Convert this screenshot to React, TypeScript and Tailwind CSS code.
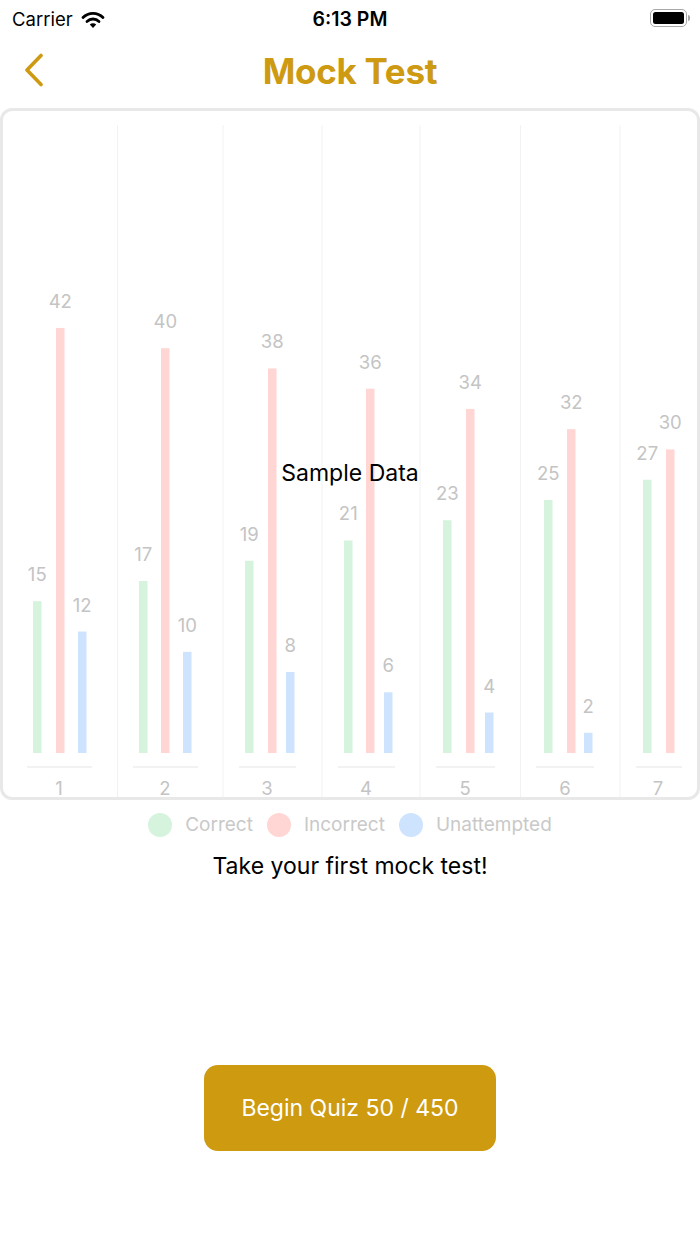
const correct = [15, 17, 19, 21, 23, 25, 27];
const incorrect = [42, 40, 38, 36, 34, 32, 30];
const unattempted = [12, 10, 8, 6, 4, 2, 0];

// left edge of each bar inside the group (green, red, blue)
const barX = [
  [33, 56, 78],
  [139, 161, 183],
  [245, 268, 286],
  [344, 366, 384],
  [443, 466, 485],
  [544, 567, 584],
  [643, 666, 0],
];
const axisLines = [
  [27, 92],
  [133, 198],
  [239, 296],
  [338, 395],
  [436, 495],
  [536, 594],
  [636, 682],
];
const labelX = [59, 165, 267, 366, 465, 565, 658];
const separators = [117.5, 223, 322, 420, 520.5, 620];

const BASE = 753;
const SCALE = 10.12;
const FONT = "Inter, 'Liberation Sans', sans-serif";

function Bar({ x, value, color }: { x: number; value: number; color: string }) {
  if (!value) return null;
  const top = BASE - value * SCALE;
  return (
    <g>
      <rect x={x} y={top} width={8.5} height={BASE - top} fill={color} />
      <text x={x + 4.25} y={top - 20} textAnchor="middle" fontSize={18.5} fill="#c4c4c4" fontFamily={FONT}>
        {value}
      </text>
    </g>
  );
}

function StatusBar() {
  return (
    <div className="h-9 pt-[3px] flex items-center justify-between px-3 relative text-black">
      <div className="flex items-center gap-2">
        <span className="text-[18.5px]">Carrier</span>
        <svg width="24" height="18" viewBox="0 0 24 18">
          <path d="M2 6.5 A14 14 0 0 1 22 6.5" stroke="#000" strokeWidth="2.8" fill="none" strokeLinecap="round" />
          <path d="M6 10.5 A8.5 8.5 0 0 1 18 10.5" stroke="#000" strokeWidth="2.8" fill="none" strokeLinecap="round" />
          <path d="M12 17 L8.8 13.6 A4.5 4.5 0 0 1 15.2 13.6 Z" fill="#000" />
        </svg>
      </div>
      <span className="absolute left-1/2 -translate-x-1/2 text-[19.5px] font-semibold">6:13 PM</span>
      <div className="flex items-center mr-[-2px] mt-[-3px]">
        <div className="w-[37px] h-[18px] rounded-[5px] border-[1.5px] border-[#a8a8a8] p-[2px]">
          <div className="w-full h-full rounded-[2.5px] bg-black" />
        </div>
        <div className="w-[2px] h-[6px] rounded-r-sm bg-[#a8a8a8] ml-[1px]" />
      </div>
    </div>
  );
}

export default function App() {
  return (
    <div className="w-[700px] h-[1244px] bg-white flex flex-col" style={{ fontFamily: FONT }}>
      <StatusBar />

      <div className="h-[68px] flex items-center relative">
        <svg className="absolute left-[22px] top-[17px]" width="24" height="34" viewBox="0 0 24 34">
          <path d="M19 2.5 L5 17 L19 31.5" stroke="#cd9a12" strokeWidth="3.6" fill="none" strokeLinecap="round" strokeLinejoin="round" />
        </svg>
        <h1 className="w-full text-center text-[35px] font-bold text-[#cd9a12] tracking-[-0.3px] mt-[2px]">Mock Test</h1>
      </div>

      <div className="mt-1 h-[692px] border-[3px] border-[#e8e8e8] rounded-[12px] bg-white">
        <svg width="694" height="686" viewBox="3 111 694 686" overflow="visible">
          {separators.map((x) => (
            <line key={x} x1={x} x2={x} y1={125} y2={797} stroke="#f2f2f2" strokeWidth={1} />
          ))}
          {axisLines.map(([a, b], i) => (
            <line key={i} x1={a} x2={b} y1={767} y2={767} stroke="#eeeeee" strokeWidth={1.5} />
          ))}
          {barX.map((xs, i) => (
            <g key={i}>
              <Bar x={xs[0]} value={correct[i]} color="#d5f3dd" />
              <Bar x={xs[1]} value={incorrect[i]} color="#ffd6d4" />
              <Bar x={xs[2]} value={unattempted[i]} color="#cde3fe" />
              <text x={labelX[i]} y={795} textAnchor="middle" fontSize={18.5} fill="#c4c4c4" fontFamily={FONT}>
                {i + 1}
              </text>
            </g>
          ))}
          <text x={350} y={481} textAnchor="middle" fontSize={23} fill="#000" fontFamily={FONT}>
            Sample Data
          </text>
        </svg>
      </div>

      <div className="mt-[11px] flex items-center justify-center gap-[14px] text-[19px] text-[#c9c9c9]">
        <div className="flex items-center gap-[13px]">
          <span className="w-6 h-6 rounded-full bg-[#d5f3dd]" />
          <span>Correct</span>
        </div>
        <div className="flex items-center gap-[13px]">
          <span className="w-6 h-6 rounded-full bg-[#ffd6d4]" />
          <span>Incorrect</span>
        </div>
        <div className="flex items-center gap-[13px]">
          <span className="w-6 h-6 rounded-full bg-[#cde3fe]" />
          <span>Unattempted</span>
        </div>
      </div>

      <p className="mt-[9px] text-center text-[23px] text-black">Take your first mock test!</p>

      <div className="mt-[182px] flex justify-center">
        <button className="w-[292px] h-[86px] rounded-[14px] bg-[#cd9a10] text-white text-[23px]">
          Begin Quiz 50 / 450
        </button>
      </div>
    </div>
  );
}
